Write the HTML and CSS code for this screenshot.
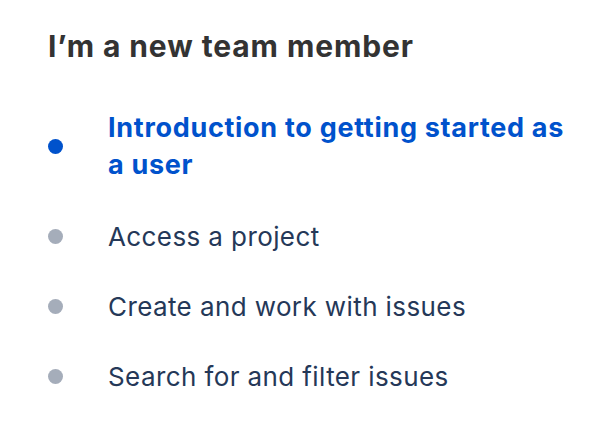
FILE: index.html
```html
<!DOCTYPE html>
<html lang="en">
<head>
<meta charset="utf-8">
<title>I'm a new team member</title>
<link rel="stylesheet" href="styles.css">
</head>
<body>
<section class="panel">
  <h2 class="title">I’m a new team member</h2>
  <ul class="steps">
    <li class="step step--active"><span class="dot"></span><a class="label" href="#">Introduction to getting started as a user</a></li>
    <li class="step"><span class="dot"></span><a class="label" href="#">Access a project</a></li>
    <li class="step"><span class="dot"></span><a class="label" href="#">Create and work with issues</a></li>
    <li class="step"><span class="dot"></span><a class="label" href="#">Search for and filter issues</a></li>
  </ul>
</section>
</body>
</html>
```

FILE: styles.css
```css
html, body {
  margin: 0;
  padding: 0;
  background: #ffffff;
}

body {
  font-family: Inter, "Noto Sans", "Liberation Sans", sans-serif;
  -webkit-font-smoothing: antialiased;
}

.panel {
  width: 530px;
  padding: 26px 0 0 48px;
}

.title {
  margin: 0;
  font-size: 30px;
  line-height: 40px;
  font-weight: 700;
  color: #333333;
  letter-spacing: 0.9px;
}

.steps {
  list-style: none;
  margin: 43px 0 0;
  padding: 0;
  display: flex;
  flex-direction: column;
  gap: 33px;
}

.step {
  display: flex;
  align-items: center;
  gap: 45px;
}

.step--active {
  margin-bottom: 2px;
}

.dot {
  flex: 0 0 15px;
  width: 15px;
  height: 15px;
  border-radius: 50%;
  background: #a5adba;
}

.label {
  font-size: 26px;
  line-height: 37px;
  color: #253858;
  text-decoration: none;
  letter-spacing: 0.4px;
}

.step--active .dot {
  background: #0052cc;
}

.step--active .label {
  color: #0052cc;
  font-size: 27px;
  font-weight: 700;
  letter-spacing: 0.7px;
}
```
